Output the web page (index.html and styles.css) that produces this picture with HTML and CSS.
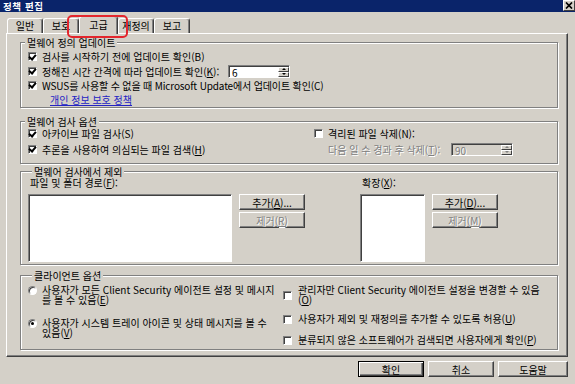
FILE: index.html
```html
<!DOCTYPE html>
<html lang="ko">
<head>
    <meta charset="UTF-8">
    <meta name="viewport" content="width=device-width, initial-scale=1.0">
    <title>정책 편집</title>
    <link rel="stylesheet" href="styles.css">
</head>
<body>
    <div class="dialog">
        <div class="titlebar">
            <span class="title">정책 편집</span>
            <span class="close-btn">
                <svg width="8" height="7" viewBox="0 0 8 7"><path d="M1 0.5 L7 6.5 M7 0.5 L1 6.5" stroke="#000" stroke-width="1.7"/></svg>
            </span>
        </div>

        <div class="tabs">
            <div class="tab">일반</div>
            <div class="tab">보호</div>
            <div class="tab active">고급</div>
            <div class="tab">재정의</div>
            <div class="tab">보고</div>
            <div class="highlight"></div>
        </div>

        <div class="panel">
            <fieldset class="group group-update">
                <legend>멀웨어 정의 업데이트</legend>
                <div class="row"><span class="check on"></span>검사를 시작하기 전에 업데이트 확인(B)</div>
                <div class="row row-spin">
                    <span class="check on"></span>
                    <span class="spin-label">정해진 시간 간격에 따라 업데이트 확인(<u>K</u>):</span>
                    <span class="spin">
                        <span class="spin-value">6</span>
                        <span class="spin-buttons"><span class="up"></span><span class="down"></span></span>
                    </span>
                </div>
                <div class="row row-wsus"><span class="check on"></span>WSUS를 사용할 수 없을 때 Microsoft Update에서 업데이트 확인(C)</div>
                <div class="row row-link"><a href="#">개인 정보 보호 정책</a></div>
            </fieldset>

            <fieldset class="group group-scan">
                <legend>멀웨어 검사 옵션</legend>
                <div class="scan-grid">
                    <div class="row"><span class="check on"></span>아카이브 파일 검사(S)</div>
                    <div class="row"><span class="check"></span>격리된 파일 삭제(N):</div>
                    <div class="row"><span class="check on"></span>추론을 사용하여 의심되는 파일 검색(<u>H</u>)</div>
                    <div class="row row-days">
                        <span class="spin-label disabled">다음 일 수 경과 후 삭제(<u>T</u>):</span>
                        <span class="spin disabled">
                            <span class="spin-value">90</span>
                            <span class="spin-buttons"><span class="up"></span><span class="down"></span></span>
                        </span>
                    </div>
                </div>
            </fieldset>

            <fieldset class="group group-exclude">
                <legend>멀웨어 검사에서 제외</legend>
                <div class="exclude">
                    <div class="exclude-col">
                        <div class="caption">파일 및 폴더 경로(<u>F</u>):</div>
                        <div class="list-row">
                            <div class="listbox listbox-paths"></div>
                            <div class="btn-stack">
                                <button class="btn">추가(<u>A</u>)...</button>
                                <button class="btn disabled">제거(<u>R</u>)</button>
                            </div>
                        </div>
                    </div>
                    <div class="exclude-col">
                        <div class="caption">확장(<u>X</u>):</div>
                        <div class="list-row">
                            <div class="listbox listbox-ext"></div>
                            <div class="btn-stack">
                                <button class="btn">추가(<u>D</u>)...</button>
                                <button class="btn disabled">제거(<u>M</u>)</button>
                            </div>
                        </div>
                    </div>
                </div>
            </fieldset>

            <fieldset class="group group-client">
                <legend>클라이언트 옵션</legend>
                <div class="client">
                    <div class="client-col">
                        <div class="option"><span class="radio"></span><span>사용자가 모든 Client Security 에이전트 설정 및 메시지<br>를 볼 수 있음(<u>E</u>)</span></div>
                        <div class="option option-second"><span class="radio on"></span><span>사용자가 시스템 트레이 아이콘 및 상태 메시지를 볼 수<br>있음(<u>V</u>)</span></div>
                    </div>
                    <div class="client-col client-right">
                        <div class="option"><span class="check"></span><span>관리자만 Client Security 에이전트 설정을 변경할 수 있음<br>(<u>O</u>)</span></div>
                        <div class="option option-u"><span class="check"></span><span>사용자가 제외 및 재정의를 추가할 수 있도록 허용(<u>U</u>)</span></div>
                        <div class="option option-p"><span class="check"></span><span>분류되지 않은 소프트웨어가 검색되면 사용자에게 확인(<u>P</u>)</span></div>
                    </div>
                </div>
            </fieldset>
        </div>

        <div class="actions">
            <button class="btn btn-default">확인</button>
            <button class="btn">취소</button>
            <button class="btn btn-help">도움말</button>
        </div>
    </div>
</body>
</html>
```

FILE: styles.css
```css
* {
    box-sizing: border-box;
}

body {
    margin: 0;
    background: #d4d0c8;
    font-family: "Noto Sans CJK KR", "Liberation Sans", sans-serif;
    font-size: 10px;
    color: #000;
}

.dialog {
    width: 575px;
    height: 384px;
    overflow: hidden;
    background: #d4d0c8;
}

/* title bar */
.titlebar {
    height: 12px;
    background: #0a246a;
    color: #fff;
    display: flex;
    justify-content: space-between;
    padding-left: 3px;
}

.title {
    font-size: 9.5px;
    font-weight: bold;
    line-height: 12px;
    letter-spacing: 0.6px;
}

.close-btn {
    width: 12px;
    height: 11px;
    background: #d4d0c8;
    border: 1px solid;
    border-color: #fff #404040 #404040 #fff;
    display: flex;
    align-items: center;
    justify-content: center;
}

/* tabs */
.tabs {
    position: relative;
    display: flex;
    align-items: flex-end;
    height: 21px;
    padding-left: 7px;
}

.tab {
    width: 36px;
    height: 15px;
    border: 1px solid #fff;
    border-bottom: none;
    border-right-color: #404040;
    border-radius: 3px 3px 0 0;
    box-shadow: inset -1px 0 #808080;
    text-align: center;
    line-height: 14px;
}

.tab.active {
    position: relative;
    z-index: 1;
    width: 39px;
    height: 18px;
    margin-bottom: -1px;
    background: #d4d0c8;
    line-height: 16px;
}

.highlight {
    position: absolute;
    z-index: 2;
    left: 67px;
    top: 3px;
    width: 61px;
    height: 23px;
    border: 2px solid #e3262d;
    border-radius: 5px;
}

/* tab page */
.panel {
    margin-left: 6px;
    width: 562px;
    height: 324px;
    border: 1px solid;
    border-color: #fff #404040 #404040 #fff;
    box-shadow: inset -1px -1px #808080;
    padding: 3px 9px 0 13px;
}

.group {
    margin: 0;
    padding: 0;
    min-width: 0;
    border: 1px solid #808080;
    box-shadow: 1px 1px 0 #fff, inset 1px 1px 0 #fff;
}

.group legend {
    margin-left: 4px;
    padding: 0 2px;
    line-height: 11px;
    background: #d4d0c8;
}

.row {
    display: flex;
    align-items: center;
    height: 14px;
    padding-left: 7px;
    white-space: nowrap;
}

.check {
    flex: none;
    width: 9px;
    height: 9px;
    margin-right: 5px;
    background: #fff;
    border: 1px solid;
    border-color: #808080 #fff #fff #808080;
    box-shadow: inset 1px 1px #404040;
    display: flex;
    align-items: center;
    justify-content: center;
}

.check.on::after {
    content: "";
    width: 3px;
    height: 5px;
    margin-top: -1px;
    border: solid #000;
    border-width: 0 2px 2px 0;
    transform: rotate(40deg);
}

.radio {
    flex: none;
    width: 9px;
    height: 9px;
    margin-right: 5px;
    border-radius: 50%;
    background: #fff;
    border: 1px solid;
    border-color: #808080 #fff #fff #808080;
    box-shadow: inset 1px 1px #404040;
    display: flex;
    align-items: center;
    justify-content: center;
}

.radio.on::after {
    content: "";
    width: 3px;
    height: 3px;
    border-radius: 50%;
    background: #000;
}

/* group 1 */
.group-update {
    padding-top: 1px;
}

.group-update .row:first-of-type {
    height: 15px;
}

.row-wsus {
    letter-spacing: -0.15px;
}

.row-link {
    height: 15px;
    padding-left: 29px;
}

.row-link a {
    color: #2323c4;
}

.spin-label {
    width: 186px;
}

.spin {
    display: flex;
    width: 62px;
    height: 13px;
    background: #fff;
    border: 1px solid;
    border-color: #808080 #fff #fff #808080;
    box-shadow: inset 1px 1px #404040;
    padding: 1px 0 0 1px;
}

.spin-value {
    flex: 1;
    padding-left: 2px;
    line-height: 11px;
}

.spin-buttons {
    width: 11px;
    display: flex;
    flex-direction: column;
}

.spin-buttons span {
    flex: 1;
    background: #d4d0c8;
    border: 1px solid;
    border-color: #fff #404040 #404040 #fff;
    display: flex;
    align-items: center;
    justify-content: center;
}

.spin-buttons .up::after {
    content: "";
    border: 2px solid transparent;
    border-top: none;
    border-bottom-color: #000;
}

.spin-buttons .down::after {
    content: "";
    border: 2px solid transparent;
    border-bottom: none;
    border-top-color: #000;
}

.disabled {
    color: #808080;
    text-shadow: 1px 1px 0 #fff;
}

.spin.disabled {
    background: #d4d0c8;
}

.spin.disabled .spin-buttons .up::after {
    border-bottom-color: #808080;
}

.spin.disabled .spin-buttons .down::after {
    border-top-color: #808080;
}

/* group 2 */
.group-scan {
    margin-top: 8px;
    padding-bottom: 5px;
}

.scan-grid {
    display: grid;
    grid-template-columns: 286px 1fr;
    grid-template-rows: 13px 18px;
}

.scan-grid .row {
    height: auto;
}

.row-days {
    padding-left: 21px;
}

.row-days .spin-label {
    width: 123px;
}

/* group 3 */
.group-exclude {
    margin-top: 2px;
    padding: 0 0 2px 7px;
}

.exclude {
    display: flex;
    gap: 55px;
}

.caption {
    height: 12px;
    line-height: 12px;
    padding-left: 2px;
}

.list-row {
    display: flex;
    gap: 7px;
    margin-top: 5px;
}

.listbox {
    height: 68px;
    background: #fff;
    border: 1px solid;
    border-color: #808080 #fff #fff #808080;
    box-shadow: inset 1px 1px #404040;
}

.listbox-paths {
    width: 204px;
}

.listbox-ext {
    width: 65px;
}

.btn-stack {
    display: flex;
    flex-direction: column;
    gap: 2px;
}

.btn {
    width: 66px;
    height: 16px;
    padding: 0;
    font: inherit;
    color: #000;
    background: #d4d0c8;
    border: 1px solid;
    border-color: #fff #404040 #404040 #fff;
    box-shadow: inset -1px -1px #808080;
    line-height: 13px;
    text-align: center;
}

.btn.disabled {
    color: #808080;
    text-shadow: 1px 1px 0 #fff;
}

/* group 4 */
.group-client {
    margin-top: 5px;
    padding: 4px 0 4px 7px;
}

.client {
    display: grid;
    grid-template-columns: 255px 1fr;
}

.option {
    display: flex;
    align-items: flex-start;
    line-height: 10px;
    white-space: nowrap;
}

.option .radio {
    margin-top: 1px;
}

.option-second {
    margin-top: 13px;
}

.client-right .option {
    align-items: center;
}

.client-right .check {
    margin-right: 6px;
}

.option-u {
    margin-top: 9px;
}

.option-p {
    margin-top: 11px;
}

/* dialog buttons */
.actions {
    display: flex;
    justify-content: flex-end;
    gap: 4px;
    padding: 4px 7px 0 0;
}

.btn-default {
    border-color: #000;
    box-shadow: inset 1px 1px #fff, inset -1px -1px #404040, inset -2px -2px #808080;
}

.btn-help {
    width: 70px;
}
```
